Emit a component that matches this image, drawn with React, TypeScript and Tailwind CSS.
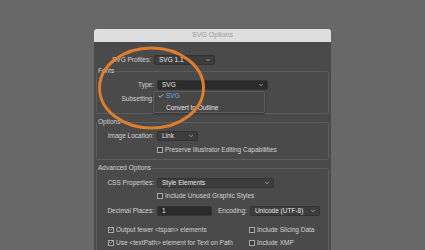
import { Check, ChevronDown } from 'lucide-react'

const font = { fontFamily: '"Liberation Sans", Arial, sans-serif' }

function Select({ value, w, dark }: { value: string; w: string; dark?: boolean }) {
  return (
    <div
      className={`flex h-[10px] items-center justify-between rounded-[2px] border border-[#333] pl-[4px] pr-[3px] text-[#e6e6e6] ${w} ${
        dark ? 'bg-[#2c2c2c]' : 'bg-[#3d3d3d]'
      }`}
    >
      <span>{value}</span>
      <ChevronDown className="size-[6px] text-[#bbb]" strokeWidth={3} aria-hidden />
    </div>
  )
}

function Box({ checked }: { checked?: boolean }) {
  return (
    <span className="flex size-[6px] shrink-0 items-center justify-center border border-[#aaa] bg-[#3d3d3d]">
      {checked && <Check className="size-[5px] text-[#ddd]" strokeWidth={4} aria-hidden />}
    </span>
  )
}

function Row({ label, children, h = 'h-[14px]' }: { label: string; children: React.ReactNode; h?: string }) {
  return (
    <div className={`flex items-center gap-[3px] ${h}`}>
      <span className="w-[57px] shrink-0 text-right">{label}</span>
      {children}
    </div>
  )
}

function Group({ title, children, className }: { title: string; children: React.ReactNode; className?: string }) {
  return (
    <fieldset className={`mx-[2px] rounded-[2px] border border-[#5c5c5c] px-0 ${className ?? ''}`}>
      <legend className="px-[1px] leading-[10px]">{title}</legend>
      {children}
    </fieldset>
  )
}

export default function App() {
  return (
    <div className="h-[250px] w-[425px] overflow-hidden bg-[#686868] pt-[29px]" style={font}>
      <div className="relative ml-[94px] w-[237px] text-[6.5px] text-[#d2d2d2]">
        <div className="flex h-[13px] items-center justify-center rounded-t-[3px] bg-[#dedede] text-[7px] text-[#9a9a9a]">
          SVG Options
        </div>
        <div className="h-[220px] bg-[#4a4a4a] pt-[13px]">
          <Row label="SVG Profiles:" h="h-[10px]">
            <Select value="SVG 1.1" w="w-[61px]" />
          </Row>

          <Group title="Fonts" className="mt-[1px] h-[48px] pb-[2px]">
            <div className="pt-[3px]">
              <Row label="Type:" h="h-[11px]">
                <Select value="SVG" w="w-[111px]" dark />
              </Row>
              <Row label="Subsetting:" h="h-[18px]">
                <span />
              </Row>
            </div>
          </Group>

          <Group title="Options" className="mt-[3px] h-[43px]">
            <div className="pt-[2px]">
              <Row label="Image Location:" h="h-[14px]">
                <Select value="Link" w="w-[41px]" />
              </Row>
              <div className="flex h-[14px] items-center gap-[2px] pl-[60px]">
                <Box />
                <span>Preserve Illustrator Editing Capabilities</span>
              </div>
            </div>
          </Group>

          <Group title="Advanced Options" className="mt-[3px] h-[90px]">
            <div className="pt-[4px]">
              <Row label="CSS Properties:" h="h-[11px]">
                <Select value="Style Elements" w="w-[117px]" />
              </Row>
              <div className="flex h-[15px] items-center gap-[2px] pl-[60px]">
                <Box />
                <span>Include Unused Graphic Styles</span>
              </div>
              <Row label="Decimal Places:" h="h-[15px]">
                <div className="flex h-[10px] w-[55px] items-center rounded-[2px] border border-[#333] bg-[#2c2c2c] pl-[4px] text-[#e6e6e6]">
                  1
                </div>
                <span className="ml-[3px]">Encoding:</span>
                <Select value="Unicode (UTF-8)" w="w-[70px]" />
              </Row>
              <div className="mt-[7px] grid grid-cols-[141px_1fr] gap-y-[4px] pl-[11px]">
                <div className="flex h-[9px] items-center gap-[2px]">
                  <Box checked />
                  <span>{'Output fewer <tspan> elements'}</span>
                </div>
                <div className="flex h-[9px] items-center gap-[2px]">
                  <Box />
                  <span>Include Slicing Data</span>
                </div>
                <div className="flex h-[9px] items-center gap-[2px]">
                  <Box checked />
                  <span>{'Use <textPath> element for Text on Path'}</span>
                </div>
                <div className="flex h-[9px] items-center gap-[2px]">
                  <Box />
                  <span>Include XMP</span>
                </div>
              </div>
            </div>
          </Group>
        </div>

        {/* open dropdown */}
        <div className="absolute left-[59px] top-[62px] flex h-[22px] w-[112px] flex-col justify-center gap-[2px] rounded-[2px] border border-[#5e5e5e] bg-[#474747] shadow-[0_1px_2px_rgba(0,0,0,0.5)]">
          <div className="flex items-center pl-[4px] text-[#6aa8ee]">
            <Check className="mr-[2px] size-[6px] text-[#ddd]" strokeWidth={3} aria-hidden />
            SVG
          </div>
          <div className="pl-[12px] text-[#e6e6e6]">Convert to Outline</div>
        </div>

        {/* orange highlight ring */}
        <svg
          className="pointer-events-none absolute left-[0px] top-[13px]"
          width="120"
          height="95"
          viewBox="0 0 120 95"
          aria-hidden
        >
          <ellipse cx="57.5" cy="46" rx="52" ry="40" fill="none" stroke="#dd7d2e" strokeWidth="3" />
        </svg>
      </div>
    </div>
  )
}
